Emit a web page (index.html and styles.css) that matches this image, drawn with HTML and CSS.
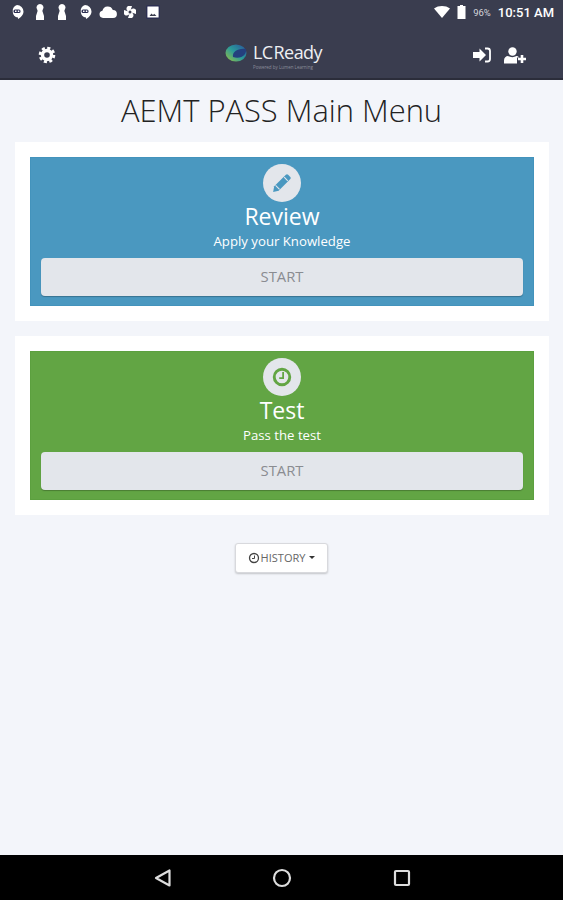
FILE: index.html
```html
<!DOCTYPE html>
<html lang="en">

<head>
  <meta charset="UTF-8">
  <meta name="viewport" content="width=device-width, initial-scale=1.0">
  <title>AEMT PASS Main Menu</title>
  <link rel="stylesheet" href="styles.css">
</head>

<body>
  <div class="header">
    <!-- Status bar -->
    <div class="status">
      <div class="status-left">
        <svg viewBox="0 0 14 16"><path d="M7 1a6.500 6.500 0 0 1 6.500 6.500c0 3.500-3 6-5.500 7.500v-1.500A6.500 6.500 0 0 1 7 1z" fill="#fff"/><rect x="3.500" y="5.500" width="7" height="3.500" rx="1.500" fill="#2c2f52"/><rect x="5" y="6.500" width="1.500" height="1.500" fill="#fff"/><rect x="7.800" y="6.500" width="1.500" height="1.500" fill="#fff"/></svg>
        <svg viewBox="0 0 14 16"><path d="M7 0a3.500 3.500 0 0 1 3 5.300c-.7 1.100-.7 1.900-.2 3L11 12v4H3v-4l1.200-3.700c.5-1.100.5-1.900-.2-3A3.500 3.500 0 0 1 7 0z" fill="#fff"/></svg>
        <svg viewBox="0 0 14 16"><path d="M7 0a3.500 3.500 0 0 1 3 5.300c-.7 1.100-.7 1.900-.2 3L11 12v4H3v-4l1.200-3.700c.5-1.100.5-1.900-.2-3A3.500 3.500 0 0 1 7 0z" fill="#fff"/></svg>
        <svg viewBox="0 0 14 16"><path d="M7 1a6.500 6.500 0 0 1 6.500 6.500c0 3.500-3 6-5.500 7.500v-1.500A6.500 6.500 0 0 1 7 1z" fill="#fff"/><rect x="3.500" y="5.500" width="7" height="3.500" rx="1.500" fill="#2c2f52"/><rect x="5" y="6.500" width="1.500" height="1.500" fill="#fff"/><rect x="7.800" y="6.500" width="1.500" height="1.500" fill="#fff"/></svg>
        <svg class="cloud" viewBox="0 0 18 16"><path d="M4 14a3.700 3.700 0 0 1-.6-7.300A5.500 5.500 0 0 1 13.800 6 4 4 0 0 1 14 14z" fill="#fff"/></svg>
        <svg viewBox="0 0 14 16"><path d="M7 8C3 7.500 2.500 3.500 5 2h4zM7 8c.5-4 4.500-4.500 6-2v4zM7 8c4 .5 4.500 4.500 2 6H5zM7 8c-.5 4-4.500 4.500-6 2V6z" fill="#fff"/><circle cx="7" cy="8" r="1.500" fill="#3a3d4f"/></svg>
        <svg viewBox="0 0 14 16"><rect x=".7" y="1.700" width="12.600" height="12.600" rx="1" fill="#fff" stroke="#2c2f52" stroke-width="1.400"/><path d="M3.500 12l2-2.500 1.500 1.500 1.200-1.200L10.500 12z" fill="#3a3d4f"/></svg>
      </div>
      <div class="status-right">
        <svg class="wifi" viewBox="0 0 16 12"><path d="M0 2.500C4.500-.8 11.500-.8 16 2.500L8 12z" fill="#fff"/></svg>
        <svg class="battery" viewBox="0 0 9 14"><path d="M3 0h3v1h2.500v13H.5V1H3z" fill="#fff"/></svg>
        <span class="percent">96%</span>
        <span class="clock">10:51 AM</span>
      </div>
    </div>

    <!-- Toolbar -->
    <div class="toolbar">
      <svg class="tool-icon gear" viewBox="0 0 18 18">
        <circle cx="9" cy="9" r="4.500" fill="none" stroke="#fff" stroke-width="3.400"/>
        <circle cx="9" cy="9" r="7" fill="none" stroke="#fff" stroke-width="2.600" stroke-dasharray="3.100 2.400"/>
      </svg>
      <div class="logo">
        <svg class="logo-mark" viewBox="0 0 22 22" preserveAspectRatio="none">
          <defs>
            <linearGradient id="globe" x1="0" y1="1" x2="1" y2="0">
              <stop offset="0" stop-color="#9bc23f"/>
              <stop offset=".5" stop-color="#2a9a9a"/>
              <stop offset="1" stop-color="#2a4f9c"/>
            </linearGradient>
          </defs>
          <circle cx="11" cy="11" r="10.500" fill="url(#globe)"/>
          <path d="M8 16c-1-6 4-11 13-10 1 6-4 13-13 10z" fill="#24407e"/>
        </svg>
        <div class="logo-text">
          <span class="logo-name">LC Ready</span>
          <span class="logo-sub">Powered by Lumen Learning</span>
        </div>
      </div>
      <div class="tool-right">
        <svg class="tool-icon" viewBox="0 0 18 16">
          <path d="M0 5h6.500V1.500L13 8l-6.500 6.500V11H0z" fill="#fff"/>
          <path d="M12 1.500h2.500A2.500 2.500 0 0 1 17 4v8a2.500 2.500 0 0 1-2.500 2.500H12" fill="none" stroke="#fff" stroke-width="1.800"/>
        </svg>
        <svg class="tool-icon user-plus" viewBox="0 0 22 17">
          <circle cx="8.500" cy="4.500" r="4.200" fill="#fff"/>
          <path d="M0 16.500v-3c0-3 2-4.500 4-4.500 2.500 1.500 6 1.500 8.500 0 1 0 2 .5 2.500 1.500H13v6z" fill="#fff"/>
          <path d="M14 12h8M18 8v8" stroke="#fff" stroke-width="2.600"/>
        </svg>
      </div>
    </div>
  </div>

  <div class="main">
    <h1>AEMT PASS Main Menu</h1>

    <div class="card">
      <div class="panel panel-review">
        <div class="round-icon">
          <svg viewBox="0 0 18 18"><path d="M1 17l1-5L12.500 1.500a1.500 1.500 0 0 1 2 0l2 2a1.500 1.500 0 0 1 0 2L6 16z" fill="#4a98c0"/><path d="M3.200 11.200l3.600 3.600M11 3.800l3.200 3.200" stroke="#e3e6eb" stroke-width="1"/></svg>
        </div>
        <div class="panel-title">Review</div>
        <div class="panel-sub">Apply your Knowledge</div>
        <button class="start-btn">START</button>
      </div>
    </div>

    <div class="card">
      <div class="panel panel-test">
        <div class="round-icon">
          <svg viewBox="0 0 18 18"><circle cx="9" cy="9" r="7" fill="none" stroke="#62a544" stroke-width="2.600"/><path d="M10 4.500V10H6.500" fill="none" stroke="#62a544" stroke-width="1.600"/></svg>
        </div>
        <div class="panel-title">Test</div>
        <div class="panel-sub">Pass the test</div>
        <button class="start-btn">START</button>
      </div>
    </div>

    <button class="history-btn">
      <svg viewBox="0 0 12 12"><circle cx="6" cy="6" r="4.500" fill="none" stroke="#444" stroke-width="1.300"/><path d="M6.500 3.500V6.500H4" fill="none" stroke="#444"/></svg>
      HISTORY
      <span class="caret"></span>
    </button>
  </div>

  <!-- Android nav bar -->
  <div class="bottom-nav">
    <svg viewBox="0 0 20 20"><path d="M17.500 2.500v15L4 10z" fill="none" stroke="#ddd" stroke-width="2.200" stroke-linejoin="round"/></svg>
    <svg viewBox="0 0 20 20"><circle cx="10" cy="10" r="8" fill="none" stroke="#ddd" stroke-width="2.200"/></svg>
    <svg viewBox="0 0 20 20"><rect x="3" y="3" width="14" height="14" rx="1" fill="none" stroke="#ddd" stroke-width="2.200"/></svg>
  </div>
</body>

</html>
```

FILE: styles.css
```css
body {
  font-family: "Open Sans", sans-serif;
  margin: 0;
  height: 900px;
  display: flex;
  flex-direction: column;
  background-color: #f3f5fa;
  overflow: hidden;
}

.header {
  background-color: #3a3d4f;
  border-bottom: 2px solid #2b2d3a;
}

.status {
  height: 32px;
  box-sizing: border-box;
  padding: 4px 9px 0 10px;
  display: flex;
  justify-content: space-between;
  align-items: flex-start;
  color: #fff;
}

.status-left {
  display: flex;
  gap: 8.700px;
}

.status-left svg {
  width: 14px;
  height: 16px;
}

.status-left .cloud {
  width: 18px;
  margin: 0 -2px;
}

.status-right {
  display: flex;
  align-items: center;
  height: 16px;
}

.wifi {
  width: 16px;
  height: 12px;
  margin-right: 7px;
}

.battery {
  width: 9px;
  height: 14px;
  margin-right: 7px;
}

.percent {
  font-family: "Roboto", sans-serif;
  font-size: 9.500px;
  color: #d5d6dc;
  margin-right: 7px;
}

.clock {
  font-family: "Roboto", sans-serif;
  font-size: 13px;
  font-weight: 500;
}

.toolbar {
  height: 46px;
  display: grid;
  grid-template-columns: 1fr auto 1fr;
  align-items: center;
  padding: 0 37px 0 38px;
}

.tool-icon {
  display: block;
  width: 18px;
  height: 16px;
}

.gear {
  height: 18px;
}

.tool-right {
  display: flex;
  justify-content: flex-end;
  align-items: center;
  gap: 13px;
}

.user-plus {
  width: 22px;
  height: 17px;
}

.logo {
  display: flex;
  align-items: flex-start;
  gap: 6px;
  margin: 3px 14px 0 0;
}

.logo-mark {
  width: 22px;
  height: 18px;
}

.logo-text {
  display: flex;
  flex-direction: column;
  width: 72px;
}

.logo-name {
  font-size: 18px;
  line-height: 17px;
  letter-spacing: -0.6px;
  word-spacing: -3px;
  color: #eeeff3;
}

.logo-sub {
  font-size: 4.500px;
  line-height: 5px;
  margin-top: 4px;
  color: #8d8f9c;
  white-space: nowrap;
}

.main {
  flex: 1;
  display: flex;
  flex-direction: column;
  align-items: center;
  padding-top: 10px;
}

h1 {
  font-size: 30.900px;
  font-weight: 300;
  line-height: 40px;
  margin: 0 0 12px;
  color: #222;
}

.card {
  align-self: flex-start;
  box-sizing: border-box;
  width: 534px;
  margin: 0 0 15px 15px;
  padding: 15px;
  background-color: #fff;
}

.panel {
  height: 149px;
  box-sizing: border-box;
  padding: 6px 10px 0;
  display: flex;
  flex-direction: column;
  align-items: center;
  color: #fff;
  border: 1px solid;
}

.panel-review {
  background-color: #4a98c0;
  border-color: #4393bc;
}

.panel-test {
  background-color: #62a544;
  border-color: #5ca03f;
}

.round-icon {
  width: 38px;
  height: 38px;
  border-radius: 50%;
  background-color: #e3e6eb;
  display: flex;
  justify-content: center;
  align-items: center;
}

.round-icon svg {
  width: 20px;
  height: 20px;
}

.panel-title {
  font-size: 23px;
  line-height: 30px;
  margin-top: -1px;
}

.panel-sub {
  font-size: 13.200px;
  line-height: 18px;
  margin-top: 1px;
}

.start-btn {
  width: 100%;
  height: 38px;
  margin-top: 8px;
  padding: 0 0 2px;
  border: none;
  border-radius: 4px;
  background-color: #e3e6eb;
  box-shadow: 0 1px 1px rgba(0, 0, 0, 0.25);
  color: #8a8c91;
  font-family: "Open Sans", sans-serif;
  font-size: 14.800px;
}

.history-btn {
  margin-top: 13px;
  width: 93px;
  height: 30px;
  padding: 0 0 1px;
  display: flex;
  justify-content: center;
  align-items: center;
  gap: 1px;
  background-color: #fff;
  border: 1px solid #d8d9dd;
  border-radius: 3px;
  box-shadow: 0 1px 2px rgba(0, 0, 0, 0.2);
  color: #666;
  font-family: "Open Sans", sans-serif;
  font-size: 11px;
}

.history-btn svg {
  width: 12px;
  height: 12px;
}

.caret {
  width: 0;
  height: 0;
  margin-left: 3px;
  border-top: 3px solid #333;
  border-left: 3px solid transparent;
  border-right: 3px solid transparent;
}

.bottom-nav {
  height: 45px;
  background-color: #000;
  display: flex;
  justify-content: center;
  align-items: center;
  gap: 100px;
}

.bottom-nav svg {
  width: 20px;
  height: 20px;
}
```
